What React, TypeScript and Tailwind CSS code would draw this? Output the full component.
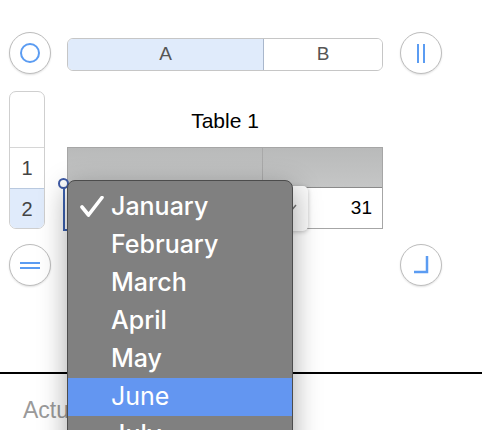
import React from "react";

function CircleBtn({ children, className = "" }: { children?: React.ReactNode; className?: string }) {
  return (
    <div
      className={`w-[42px] h-[42px] rounded-full border border-[#bdbdbd] bg-white shadow-[0_1px_2px_rgba(0,0,0,0.12)] flex items-center justify-center ${className}`}
    >
      {children}
    </div>
  );
}

export default function App() {
  const months = ["January", "February", "March", "April", "May", "June", "July"];
  return (
    <div className="relative w-[482px] h-[430px] overflow-hidden bg-white font-['Liberation_Sans',Arial,sans-serif]">
      <div className="h-[372px]">
        <div className="flex pl-[9px] pt-[32px] gap-[16px]">
          {/* left column */}
          <div className="flex flex-col w-[42px]">
            <CircleBtn>
              <div className="w-[20px] h-[20px] rounded-full border-2 border-[#5b9cf2]" />
            </CircleBtn>
            <div className="mt-[17px] w-[36px] border border-[#cfcfcf] rounded-[7px] overflow-hidden flex flex-col bg-white">
              <div className="h-[55px]" />
              <div className="h-[41px] border-t border-[#d6d6d6] flex items-center justify-center text-[20px] text-[#444]">
                1
              </div>
              <div className="h-[40px] border-t border-[#b9c9df] bg-[#e0ebfb] flex items-center justify-center text-[20px] text-[#444]">
                2
              </div>
            </div>
            <CircleBtn className="mt-[15px]">
              <div className="flex flex-col gap-[3px]">
                <div className="w-[20px] h-[2px] bg-[#5b9cf2]" />
                <div className="w-[20px] h-[2px] bg-[#5b9cf2]" />
              </div>
            </CircleBtn>
          </div>

          {/* center column */}
          <div className="w-[316px] flex flex-col">
            <div className="mt-[6px] h-[33px] flex rounded-[6px] overflow-hidden border border-[#c6c6c6] text-[19px] text-[#555]">
              <div className="w-[196px] bg-[#e0ebfb] border-r border-[#a9b7cc] flex items-center justify-center">A</div>
              <div className="flex-1 bg-white flex items-center justify-center">B</div>
            </div>
            <div className="h-[76px] flex items-end justify-center pb-[14px]">
              <div className="text-[21px] leading-[24px] text-black">Table 1</div>
            </div>
            <div className="border border-[#a6a6a6] flex flex-col">
              <div className="h-[40px] flex bg-gradient-to-b from-[#b9baba] to-[#c5c6c6] border-b border-[#8a8a8a]">
                <div className="w-[195px] border-r border-[#a9a9a9]" />
                <div className="flex-1" />
              </div>
              <div className="h-[40px] flex bg-white">
                <div className="w-[195px]" />
                <div className="flex-1 flex items-center justify-end pr-[10px] text-[19px] text-black">31</div>
              </div>
            </div>
          </div>

          {/* right column */}
          <div className="ml-[1px] flex flex-col">
            <CircleBtn>
              <div className="flex gap-[4px]">
                <div className="w-[2px] h-[19px] bg-[#5b9cf2]" />
                <div className="w-[2px] h-[19px] bg-[#5b9cf2]" />
              </div>
            </CircleBtn>
            <CircleBtn className="mt-[170px]">
              <svg width="20" height="20" viewBox="0 0 20 20">
                <path d="M3 17 H16 V1" fill="none" stroke="#5b9cf2" strokeWidth="2.5" />
              </svg>
            </CircleBtn>
          </div>
        </div>
      </div>

      <div className="border-t-2 border-black pl-[23px] pt-[24px]">
        <div className="text-[23px] leading-[24px] text-[#9a9a9a]">Actual</div>
      </div>

      {/* selection outline */}
      <div className="absolute left-[63px] top-[186px] w-[200px] h-[45px] border-2 border-[#3d62b0]" />
      <div className="absolute left-[58px] top-[178px] w-[11px] h-[11px] rounded-full bg-white border-2 border-[#3f5ba6]" />

      {/* popup button */}
      <div className="absolute left-[262px] top-[186px] w-[46px] h-[45px] bg-[#fafafa] rounded-[5px] shadow-[0_1px_4px_rgba(0,0,0,0.25)]">
        <svg className="absolute left-[27px] top-[18px]" width="8" height="6" viewBox="0 0 8 6">
          <path d="M1 1 L4 4.5 L7 1" fill="none" stroke="#777" strokeWidth="1.5" />
        </svg>
      </div>

      {/* menu */}
      <div className="absolute left-[67px] top-[180px] w-[226px] h-[290px] bg-[#808080] border border-[#4c4c4c] rounded-t-[8px] shadow-[0_8px_28px_rgba(0,0,0,0.35)] pt-[7px] font-['Inter',sans-serif]">
        {months.map((m, i) => {
          const hl = m === "June";
          return (
            <div
              key={m}
              className={`relative h-[38px] flex items-center pl-[43px] text-[25px] text-white ${hl ? "bg-[#6396f1] font-normal" : "font-medium"}`}
            >
              {i === 0 && (
                <svg className="absolute left-[12px] top-[8px]" width="24" height="22" viewBox="0 0 24 22">
                  <path d="M2 11 L8.5 19 L22 1.5" fill="none" stroke="white" strokeWidth="3.6" strokeLinecap="round" strokeLinejoin="round" />
                </svg>
              )}
              {m}
            </div>
          );
        })}
      </div>
    </div>
  );
}
